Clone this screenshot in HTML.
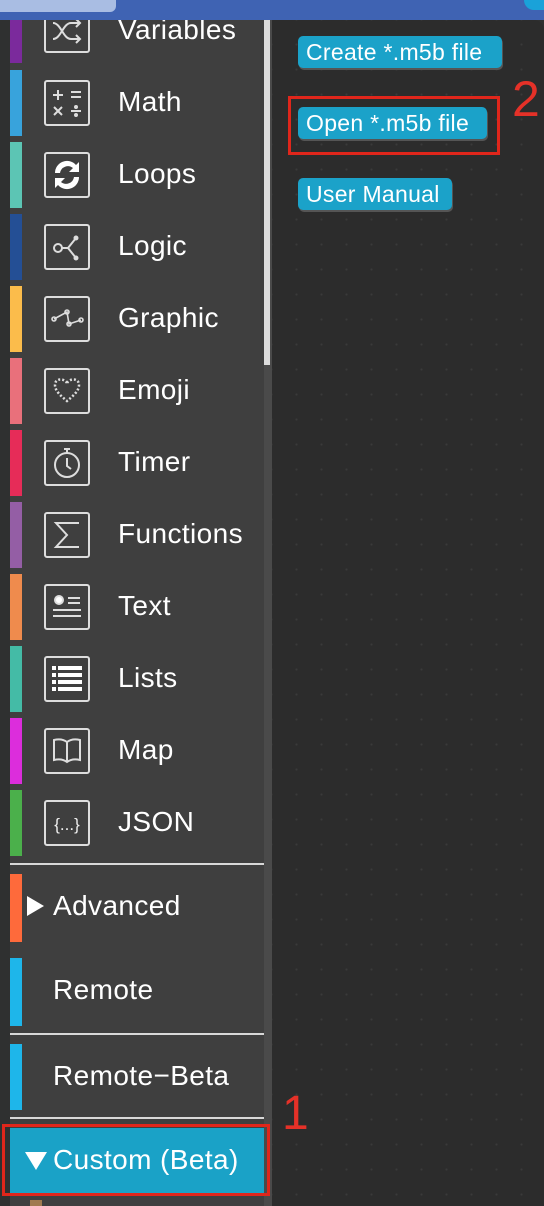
<!DOCTYPE html>
<html><head><meta charset="utf-8"><style>
*{margin:0;padding:0;box-sizing:border-box}
body{width:544px;height:1206px;overflow:hidden;background:#2f3030;font-family:"Liberation Sans",sans-serif;position:relative}
.abs{position:absolute}
#side{left:10px;top:0;width:254px;height:1206px;background:#3f3f3f}
#scroll{left:264px;top:0;width:8px;height:1206px;background:#4a4a4a}
#thumb{left:264px;top:20px;width:6px;height:345px;background:#dcdcdc}
#ws{left:272px;top:20px;width:272px;height:1186px;background:#2c2c2c;border-top-right-radius:10px;
background-image:radial-gradient(#3a3a3a 1px,transparent 1.2px);background-size:25px 25px;background-position:12px 12px}
#top{left:0;top:0;width:544px;height:20px;background:#3f63b3}
#tab{left:0;top:0;width:116px;height:12px;background:#a9bde3;border-bottom-right-radius:6px}
.bar{position:absolute;left:10px;width:12px}
.ico{position:absolute;left:44px;width:46px;height:46px;border:2px solid #ddd;border-radius:3px}
.ico svg{width:42px;height:42px;display:block}
.lbl{position:absolute;left:118px;color:#fff;font-size:28px;letter-spacing:0.4px;line-height:30px}
.sep{position:absolute;left:10px;width:254px;height:2px;background:#d8d8d8}
.btn{position:absolute;left:298px;height:32px;background:#1ba2c9;border-radius:5px;color:#fff;font-size:23px;letter-spacing:0.3px;line-height:32px;padding-left:8px;box-shadow:1px 2px 0 #555;white-space:nowrap}
.red{border:3px solid #e0261b}
</style></head><body>
<div id="side" class="abs"></div>
<div id="scroll" class="abs"></div>
<div id="thumb" class="abs"></div>
<div id="ws" class="abs"></div>

<div class="bar" style="top:0;height:63px;background:#7b2a9c"></div>
<div class="ico" style="top:7px"><svg viewBox="0 0 42 42" fill="none" stroke="#ddd" stroke-width="2"><path d="M7 14c8 0 10 16 18 16h8M7 30c8 0 10-16 18-16h8M30 10l4 4-4 4M30 26l4 4-4 4"/></svg></div>
<div class="lbl" style="top:15px">Variables</div>

<div class="bar" style="top:70px;height:66px;background:#38a3dc"></div>
<div class="ico" style="top:80px"><svg viewBox="0 0 42 42" fill="none" stroke="#ddd" stroke-width="2"><path d="M7 13h10M12 8v10M25 10h10M25 15h10M8 25l8 8M16 25l-8 8M25 29h10"/><circle cx="30" cy="25" r="1" fill="#ddd"/><circle cx="30" cy="33" r="1" fill="#ddd"/></svg></div>
<div class="lbl" style="top:87px">Math</div>

<div class="bar" style="top:142px;height:66px;background:#5cc5b4"></div>
<div class="ico" style="top:152px"><svg viewBox="0 0 42 42" fill="#fff"><path d="M9 19a12 12 0 0 1 21-8l3-3v10H23l4-4a8 8 0 0 0-13 5z"/><path d="M33 23a12 12 0 0 1-21 8l-3 3V24h10l-4 4a8 8 0 0 0 13-5z"/></svg></div>
<div class="lbl" style="top:159px">Loops</div>

<div class="bar" style="top:214px;height:66px;background:#244f95"></div>
<div class="ico" style="top:224px"><svg viewBox="0 0 42 42" fill="none" stroke="#ddd" stroke-width="2"><circle cx="12" cy="22" r="4"/><path d="M16 22h6l8-10M22 22l8 10"/><circle cx="30" cy="12" r="1.5" fill="#ddd"/><circle cx="30" cy="32" r="1.5" fill="#ddd"/></svg></div>
<div class="lbl" style="top:231px">Logic</div>

<div class="bar" style="top:286px;height:66px;background:#fbbc4b"></div>
<div class="ico" style="top:296px"><svg viewBox="0 0 42 42" fill="none" stroke="#ddd" stroke-width="1.6"><path d="M8 21l13-7 2 12 12-4"/><circle cx="8" cy="21" r="2"/><circle cx="21" cy="14" r="2"/><circle cx="23" cy="26" r="2"/><circle cx="35" cy="22" r="2"/></svg></div>
<div class="lbl" style="top:303px">Graphic</div>

<div class="bar" style="top:358px;height:66px;background:#e9707b"></div>
<div class="ico" style="top:368px"><svg viewBox="0 0 42 42" fill="none" stroke="#ddd" stroke-width="2.5" stroke-dasharray="2 2"><path d="M21 13c-3-5-12-5-12 2 0 6 6 11 12 16 6-5 12-10 12-16 0-7-9-7-12-2z"/></svg></div>
<div class="lbl" style="top:375px">Emoji</div>

<div class="bar" style="top:430px;height:66px;background:#e62c58"></div>
<div class="ico" style="top:440px"><svg viewBox="0 0 42 42" fill="none" stroke="#ddd" stroke-width="2"><circle cx="21" cy="23" r="12"/><path d="M21 11V7M18 7h6M21 16v8l4 3"/></svg></div>
<div class="lbl" style="top:447px">Timer</div>

<div class="bar" style="top:502px;height:66px;background:#945ea5"></div>
<div class="ico" style="top:512px"><svg viewBox="0 0 42 42" fill="none" stroke="#ddd" stroke-width="2"><path d="M33 9H10l11 12-11 12h23"/></svg></div>
<div class="lbl" style="top:519px">Functions</div>

<div class="bar" style="top:574px;height:66px;background:#ef8b4d"></div>
<div class="ico" style="top:584px"><svg viewBox="0 0 42 42" fill="none" stroke="#ddd" stroke-width="2"><circle cx="13" cy="14" r="4" fill="#fff"/><path d="M22 12h12M22 17h12M7 24h28M7 30h28"/></svg></div>
<div class="lbl" style="top:591px">Text</div>

<div class="bar" style="top:646px;height:66px;background:#44bba6"></div>
<div class="ico" style="top:656px"><svg viewBox="0 0 42 42" fill="#fff"><rect x="6" y="8" width="4" height="4"/><rect x="12" y="8" width="24" height="4"/><rect x="6" y="15" width="4" height="4"/><rect x="12" y="15" width="24" height="4"/><rect x="6" y="22" width="4" height="4"/><rect x="12" y="22" width="24" height="4"/><rect x="6" y="29" width="4" height="4"/><rect x="12" y="29" width="24" height="4"/></svg></div>
<div class="lbl" style="top:663px">Lists</div>

<div class="bar" style="top:718px;height:66px;background:#dc2ddc"></div>
<div class="ico" style="top:728px"><svg viewBox="0 0 42 42" fill="none" stroke="#ddd" stroke-width="2"><path d="M21 12c-4-3-9-3-13-2v20c4-1 9-1 13 2 4-3 9-3 13-2V10c-4-1-9-1-13 2zM21 12v20"/></svg></div>
<div class="lbl" style="top:735px">Map</div>

<div class="bar" style="top:790px;height:66px;background:#4bb04b"></div>
<div class="ico" style="top:800px"><svg viewBox="0 0 42 42"><text x="21" y="28" fill="#eee" font-size="17" text-anchor="middle" font-family="Liberation Sans">{...}</text></svg></div>
<div class="lbl" style="top:807px">JSON</div>

<div class="sep" style="top:863px"></div>
<div class="bar" style="top:874px;height:68px;background:#fe6a3b"></div>
<div class="abs" style="left:27px;top:896px;width:0;height:0;border-left:17px solid #fff;border-top:10px solid transparent;border-bottom:10px solid transparent"></div>
<div class="lbl" style="left:53px;top:891px">Advanced</div>

<div class="bar" style="top:958px;height:68px;background:#1eb6ea"></div>
<div class="lbl" style="left:53px;top:975px">Remote</div>
<div class="sep" style="top:1033px"></div>

<div class="bar" style="top:1044px;height:66px;background:#1eb6ea"></div>
<div class="lbl" style="left:53px;top:1061px">Remote−Beta</div>
<div class="sep" style="top:1117px"></div>

<div class="abs" style="left:10px;top:1128px;width:254px;height:66px;background:#1aa2c7"></div>
<div class="abs" style="left:25px;top:1152px;width:0;height:0;border-top:18px solid #fff;border-left:11px solid transparent;border-right:11px solid transparent"></div>
<div class="lbl" style="left:53px;top:1145px">Custom (Beta)</div>
<div class="abs red" style="left:2px;top:1124px;width:268px;height:72px"></div>
<div class="abs" style="left:30px;top:1200px;width:12px;height:6px;background:#a07a50"></div>
<div class="abs" style="left:282px;top:1090px;color:#e53128;font-size:48px;line-height:48px">1</div>

<div class="btn" style="top:36px;width:204px">Create *.m5b file</div>
<div class="btn" style="top:107px;width:189px">Open *.m5b file</div>
<div class="abs red" style="left:288px;top:96px;width:212px;height:59px"></div>
<div class="abs" style="left:512px;top:74px;color:#e53128;font-size:50px;line-height:50px">2</div>
<div class="btn" style="top:178px;width:154px">User Manual</div>

<div id="top" class="abs"></div>
<div id="tab" class="abs"></div>
<div class="abs" style="left:524px;top:0;width:20px;height:10px;background:#1aa2d9;border-bottom-left-radius:10px"></div>
</body></html>
